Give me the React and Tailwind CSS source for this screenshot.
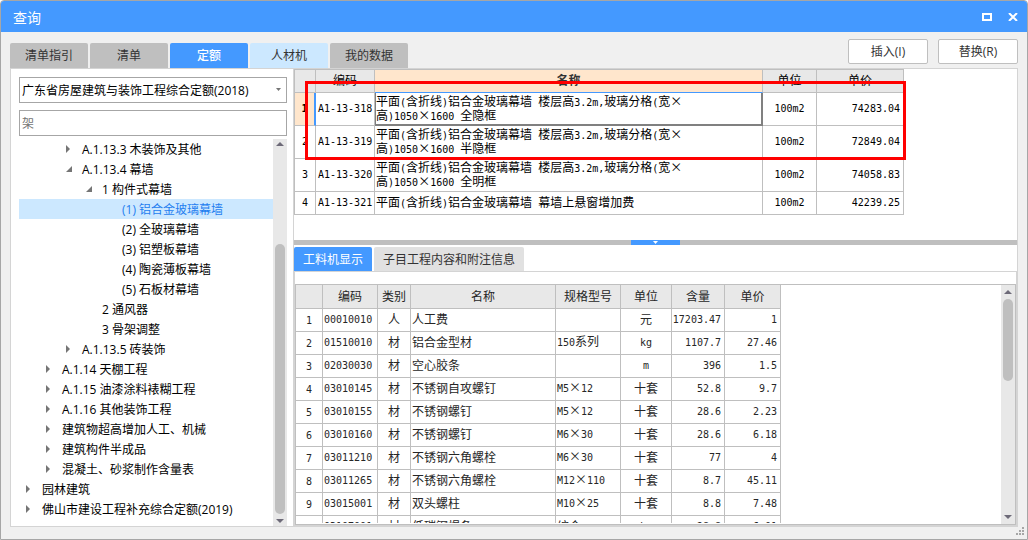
import { Fragment } from "react";

const UI_FONT = "font-['Open_Sans','Noto_Sans_CJK_SC',sans-serif]";
const GRID_FONT = "font-['Noto_Sans_CJK_SC',sans-serif]";

const MAIN_TABS = [
  { label: "清单指引", style: "bg-[#bfbfbf] text-[#333333]" },
  { label: "清单", style: "bg-[#bfbfbf] text-[#333333]" },
  { label: "定额", style: "bg-[#4499ff] text-white font-medium", selected: true },
  { label: "人材机", style: "bg-[#cce8ff] text-[#333333]" },
  { label: "我的数据", style: "bg-[#bfbfbf] text-[#333333]" },
];

const INDENT = ["pl-[3px]", "pl-[23px]", "pl-[43px]", "pl-[63px]", "pl-[83px]"];

const TREE = [
  { level: 2, arrow: "closed", text: "A.1.13.3 木装饰及其他" },
  { level: 2, arrow: "open", text: "A.1.13.4 幕墙" },
  { level: 3, arrow: "open", text: "1 构件式幕墙" },
  { level: 4, text: "(1) 铝合金玻璃幕墙", selected: true },
  { level: 4, text: "(2) 全玻璃幕墙" },
  { level: 4, text: "(3) 铝塑板幕墙" },
  { level: 4, text: "(4) 陶瓷薄板幕墙" },
  { level: 4, text: "(5) 石板材幕墙" },
  { level: 3, text: "2 通风器" },
  { level: 3, text: "3 骨架调整" },
  { level: 2, arrow: "closed", text: "A.1.13.5 砖装饰" },
  { level: 1, arrow: "closed", text: "A.1.14 天棚工程" },
  { level: 1, arrow: "closed", text: "A.1.15 油漆涂料裱糊工程" },
  { level: 1, arrow: "closed", text: "A.1.16 其他装饰工程" },
  { level: 1, arrow: "closed", text: "建筑物超高增加人工、机械" },
  { level: 1, arrow: "closed", text: "建筑构件半成品" },
  { level: 1, arrow: "closed", text: "混凝土、砂浆制作含量表" },
  { level: 0, arrow: "closed", text: "园林建筑" },
  { level: 0, arrow: "closed", text: "佛山市建设工程补充综合定额(2019)" },
];

const ITEMS = [
  { code: "A1-13-318", name: ["平面(含折线)铝合金玻璃幕墙 楼层高3.2m,玻璃分格(宽×", "高)1050×1600 全隐框"], unit: "100m2", price: "74283.04" },
  { code: "A1-13-319", name: ["平面(含折线)铝合金玻璃幕墙 楼层高3.2m,玻璃分格(宽×", "高)1050×1600 半隐框"], unit: "100m2", price: "72849.04" },
  { code: "A1-13-320", name: ["平面(含折线)铝合金玻璃幕墙 楼层高3.2m,玻璃分格(宽×", "高)1050×1600 全明框"], unit: "100m2", price: "74058.83" },
  { code: "A1-13-321", name: ["平面(含折线)铝合金玻璃幕墙 幕墙上悬窗增加费"], unit: "100m2", price: "42239.25" },
];

const MATERIALS = [
  ["00010010", "人", "人工费", "", "元", "17203.47", "1"],
  ["01510010", "材", "铝合金型材", "150系列", "kg", "1107.7", "27.46"],
  ["02030030", "材", "空心胶条", "", "m", "396", "1.5"],
  ["03010145", "材", "不锈钢自攻螺钉", "M5×12", "十套", "52.8", "9.7"],
  ["03010155", "材", "不锈钢螺钉", "M5×12", "十套", "28.6", "2.23"],
  ["03010160", "材", "不锈钢螺钉", "M6×30", "十套", "28.6", "6.18"],
  ["03011210", "材", "不锈钢六角螺栓", "M6×30", "十套", "77", "4"],
  ["03011265", "材", "不锈钢六角螺栓", "M12×110", "十套", "8.7", "45.11"],
  ["03015001", "材", "双头螺柱", "M10×25", "十套", "8.8", "7.48"],
  ["03107001", "材", "低碳钢焊条", "综合", "kg", "28.8", "6.01"],
];

// Half-width runs use a monospace face so that two of them fill one ideograph.
function Mixed({ children }) {
  return String(children)
    .split(/([\x20-\x7e]+)/)
    .filter(Boolean)
    .map((run, i) =>
      /^[\x20-\x7e]+$/.test(run) ? (
        <span key={i} className="font-['DejaVu_Sans_Mono',monospace] text-[10px] font-normal whitespace-pre">{run}</span>
      ) : (
        <Fragment key={i}>{run}</Fragment>
      ),
    );
}

function TreeArrow({ state }) {
  return (
    <svg width="20" height="20" viewBox="0 0 20 20" className="shrink-0" fill="#757575" aria-hidden="true">
      {state === "closed" && <path d="M4 6 L8 10 L4 14 Z" />}
      {state === "open" && <path d="M10 7 V13 H4 Z" />}
    </svg>
  );
}

function ScrollBar({ thumb, up, down }) {
  return (
    <div className="flex w-[14px] shrink-0 flex-col bg-[#e8e8e8]">
      <button type="button" aria-label="向上滚动" className={`flex shrink-0 justify-center ${up}`}>
        <svg width="8" height="4" viewBox="0 0 8 4" fill="#6d6a78"><path d="M0 4 L4 0 L8 4 Z" /></svg>
      </button>
      <div className="flex min-h-0 flex-1 justify-center">
        <div className={`w-[10px] rounded-full bg-[#bfbfbf] ${thumb}`} />
      </div>
      <button type="button" aria-label="向下滚动" className={`flex shrink-0 justify-center ${down}`}>
        <svg width="8" height="4" viewBox="0 0 8 4" fill="#6d6a78"><path d="M0 0 L4 4 L8 0 Z" /></svg>
      </button>
    </div>
  );
}

function QuotaPane() {
  return (
    <aside className="flex w-[283px] shrink-0 flex-col border-r border-[#d4d4d4] pt-2 pr-[6px] pl-2">
      <div className="relative">
        <select aria-label="定额库" className="h-[26px] w-full appearance-none border border-[#a6a6a6] bg-white pt-[2px] pl-[2px] outline-none">
          <option>广东省房屋建筑与装饰工程综合定额(2018)</option>
        </select>
        <svg width="5" height="3" viewBox="0 0 5 3" fill="#757575" className="pointer-events-none absolute top-[11px] right-[6px]" aria-hidden="true">
          <path d="M0 0 H5 L2.5 3 Z" />
        </svg>
      </div>
      <input type="text" aria-label="搜索" placeholder="架" className="mt-[7px] h-[26px] w-full border border-[#a6a6a6] bg-white pl-[2px] outline-none placeholder:text-[#757575]" />
      <div className="mt-[3px] flex min-h-0 flex-1">
        <ul role="tree" aria-label="定额目录" className="min-w-0 flex-1 overflow-hidden">
          {TREE.map((node) => (
            <li
              key={node.text}
              role="treeitem"
              aria-level={node.level + 1}
              aria-selected={!!node.selected}
              className={`flex h-5 items-center whitespace-nowrap ${INDENT[node.level]} ${node.selected ? "bg-[#cce8ff] text-[#1f7ef0]" : ""}`}
            >
              <TreeArrow state={node.arrow} />
              <span className="pt-[2px] leading-5">{node.text}</span>
            </li>
          ))}
        </ul>
        <ScrollBar up="h-[11px] pt-[3px]" thumb="mt-[94px]" down="h-[12px] pt-[5px]" />
      </div>
    </aside>
  );
}

const LINE = "border-r border-b border-[#bfbfbf]";

function ItemTable() {
  return (
    <div className="relative w-[610px]">
      <table className={`w-full table-fixed border-separate border-spacing-0 border-t border-l border-[#bfbfbf] leading-[14px] ${GRID_FONT}`}>
        <colgroup>
          <col className="w-[21px]" />
          <col className="w-[59px]" />
          <col className="w-[388px]" />
          <col className="w-[54px]" />
          <col className="w-[87px]" />
        </colgroup>
        <thead>
          <tr className="h-[23px]">
            <th className={`bg-[#e8e8e8] p-0 ${LINE}`} />
            <th className={`bg-[#e8e8e8] p-0 pb-[2px] font-normal ${LINE}`}>编码</th>
            <th className="border-r border-b border-r-[#bfbfbf] border-b-[#4499ff] bg-[#ffe6cc] p-0 pb-[2px] font-bold text-[#333333]">名称</th>
            <th className={`bg-[#e8e8e8] p-0 pb-[2px] font-normal ${LINE}`}>单位</th>
            <th className={`bg-[#e8e8e8] p-0 pb-[2px] font-normal ${LINE}`}>单价</th>
          </tr>
        </thead>
        <tbody>
          {ITEMS.map((item, i) => (
            <tr key={item.code} className={item.name.length > 1 ? "h-[33px]" : "h-[23px]"}>
              <td
                className={`p-0 text-center text-[10px] font-['DejaVu_Sans_Mono',monospace] ${
                  i === 0 ? "border-r-2 border-b border-r-[#4499ff] border-b-[#bfbfbf] bg-[#ffe6cc] font-bold" : LINE
                }`}
              >
                {i + 1}
              </td>
              <td className={`p-0 pb-[2px] pl-[2px] whitespace-nowrap ${LINE}`}><Mixed>{item.code}</Mixed></td>
              <td className={i === 0 ? "border-r-2 border-b-2 border-l border-[#808080] p-0 pb-px" : `p-0 pb-[2px] pl-px ${LINE}`}>
                {item.name.map((line) => (
                  <div key={line} className="h-[14px] whitespace-nowrap"><Mixed>{line}</Mixed></div>
                ))}
              </td>
              <td className={`p-0 pb-[2px] text-center ${LINE}`}><Mixed>{item.unit}</Mixed></td>
              <td className={`p-0 pr-[3px] pb-[2px] text-right ${LINE}`}><Mixed>{item.price}</Mixed></td>
            </tr>
          ))}
        </tbody>
      </table>
      <div className="pointer-events-none absolute top-[12px] left-[11px] h-[79px] w-[601px] border-3 border-[#ff0000]" />
    </div>
  );
}

function MaterialTable() {
  const align = ["pl-px text-left", "text-center", "pl-px text-left", "pl-px text-left", "text-center", "pr-[3px] text-right", "pr-[3px] text-right"];
  return (
    <table className={`w-[485px] table-fixed border-separate border-spacing-0 leading-[14px] text-[#262626] ${GRID_FONT}`}>
      <colgroup>
        <col className="w-[27px]" />
        <col className="w-[55px]" />
        <col className="w-[33px]" />
        <col className="w-[145px]" />
        <col className="w-[65px]" />
        <col className="w-[51px]" />
        <col className="w-[53px]" />
        <col className="w-[56px]" />
      </colgroup>
      <thead>
        <tr className="h-[24px]">
          {["", "编码", "类别", "名称", "规格型号", "单位", "含量", "单价"].map((head) => (
            <th key={head} className={`bg-[#e8e8e8] p-0 pb-[2px] font-normal ${LINE}`}>{head}</th>
          ))}
        </tr>
      </thead>
      <tbody>
        {MATERIALS.map((row, i) => (
          <tr key={row[0]} className="h-[23px]">
            <td className={`p-0 text-center ${LINE}`}><Mixed>{i + 1}</Mixed></td>
            {row.map((value, c) => (
              <td key={c} className={`p-0 pb-[2px] whitespace-nowrap ${align[c]} ${LINE}`}><Mixed>{value}</Mixed></td>
            ))}
          </tr>
        ))}
      </tbody>
    </table>
  );
}

export default function App() {
  return (
    <div className={`relative flex h-screen flex-col overflow-hidden rounded-t-[4px] border border-[#a6a6a6] bg-[#f0f0f0] text-[12px] text-black ${UI_FONT}`}>
      <header className="flex h-[31px] shrink-0 items-center justify-between bg-[#4499ff] pr-[9px] pl-3 text-white">
        <h1 className="pt-[2px] text-[14px] leading-5">查询</h1>
        <div className="flex gap-4">
          <button type="button" aria-label="最大化" className="flex">
            <svg width="10" height="8" viewBox="0 0 10 8" fill="none" stroke="currentColor" strokeWidth="2"><path d="M1 1 H9 V7 H1 Z" /></svg>
          </button>
          <button type="button" aria-label="关闭" className="flex">
            <svg width="10" height="8" viewBox="0 0 10 8" fill="none" stroke="currentColor" strokeWidth="2"><path d="M1 0 L9 8 M9 0 L1 8" /></svg>
          </button>
        </div>
      </header>

      <div className="flex shrink-0 items-end justify-between px-[9px]">
        <div role="tablist" className="flex gap-[2px]">
          {MAIN_TABS.map((tab) => (
            <button key={tab.label} type="button" role="tab" aria-selected={!!tab.selected} className={`h-[25px] w-[78px] rounded-t-[2px] ${tab.style}`}>
              {tab.label}
            </button>
          ))}
        </div>
        <div className="flex gap-[10px] pt-[7px] pb-1">
          <button type="button" className="h-[25px] w-[80px] rounded-[2px] border border-[#bfbfbf] bg-white text-[#333333]">插入(I)</button>
          <button type="button" className="h-[25px] w-[80px] rounded-[2px] border border-[#bfbfbf] bg-white text-[#333333]">替换(R)</button>
        </div>
      </div>

      <main className="mx-[9px] mb-3 flex min-h-0 flex-1 border border-[#d4d4d4] bg-white">
        <QuotaPane />
        <section className="flex min-w-0 flex-1 flex-col">
          <div className="h-[171px] shrink-0">
            <ItemTable />
          </div>
          <div className="flex h-[5px] shrink-0 justify-center bg-[#bfbfbf]">
            <button type="button" aria-label="折叠" className="flex w-[49px] items-center justify-center bg-[#4499ff]">
              <svg width="5" height="3" viewBox="0 0 5 3" fill="#ffffff"><path d="M0 0 H5 L2.5 3 Z" /></svg>
            </button>
          </div>
          <div role="tablist" className="mt-[2px] flex shrink-0 gap-[2px]">
            <button type="button" role="tab" aria-selected="true" className="h-6 w-[78px] rounded-t-[2px] bg-[#4499ff] pt-[2px] text-white">工料机显示</button>
            <button type="button" role="tab" aria-selected="false" className="h-6 w-[150px] rounded-t-[2px] bg-[#e1e1e1] pt-[2px] text-[#333333]">子目工程内容和附注信息</button>
          </div>
          <div className="flex min-h-0 flex-1 flex-col border border-[#d4d4d4] pt-3">
            <div className="flex min-h-0 flex-1 border border-[#bfbfbf]">
              <div className="mb-px min-w-0 flex-1 overflow-hidden">
                <MaterialTable />
              </div>
              <ScrollBar up="h-[14px] pt-[5px]" thumb="h-[82px]" down="h-[14px] pt-[5px]" />
            </div>
          </div>
        </section>
      </main>

      <svg width="8" height="8" viewBox="0 0 8 8" fill="#a6a6a6" className="absolute right-[3px] bottom-[4px]" aria-hidden="true">
        <path d="M6 0h2v2h-2z M3 3h2v2h-2z M6 3h2v2h-2z M0 6h2v2h-2z M3 6h2v2h-2z M6 6h2v2h-2z" />
      </svg>
    </div>
  );
}
